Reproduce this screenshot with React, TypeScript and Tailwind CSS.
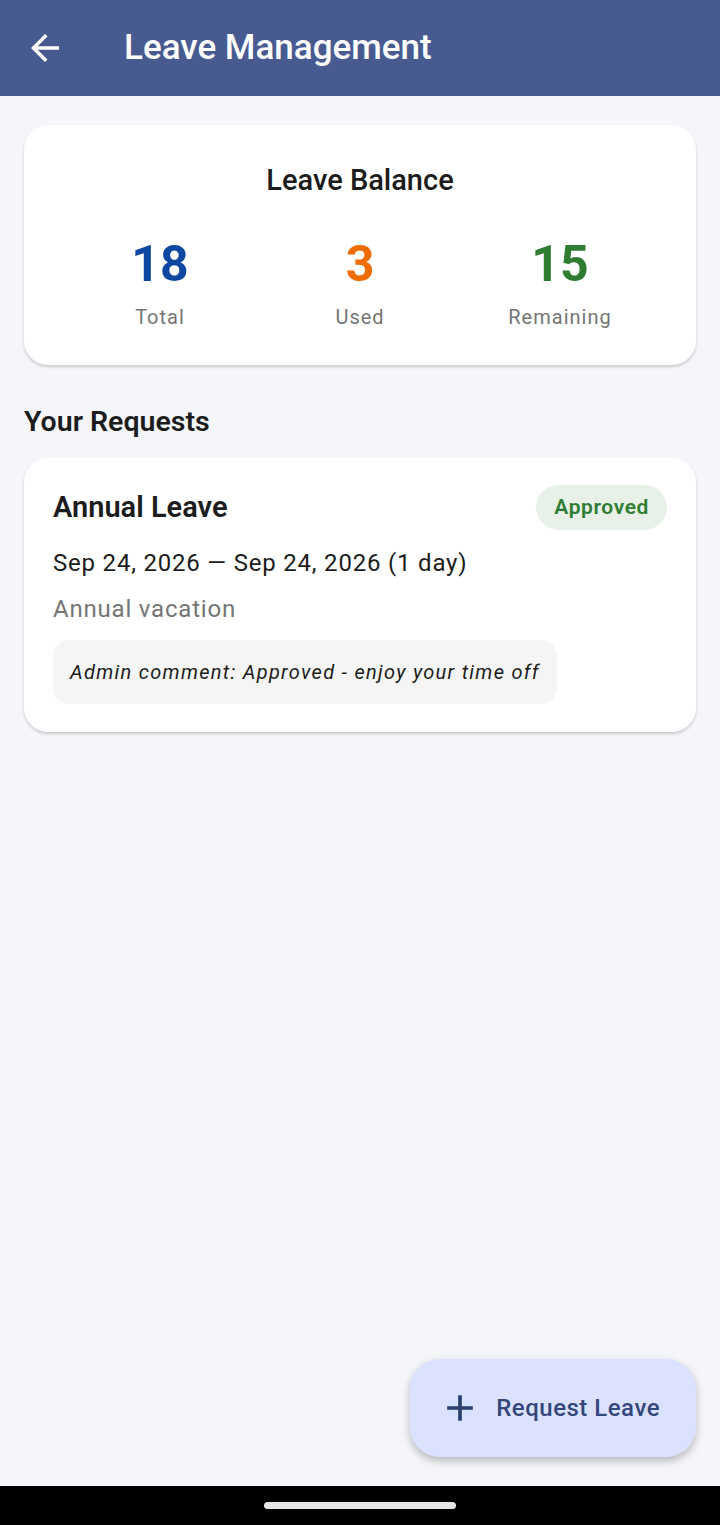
import React from "react";

const font = { fontFamily: "Roboto, 'Noto Sans', sans-serif" };

const stats = [
  { value: "18", label: "Total", color: "text-[#0d47a1]" },
  { value: "3", label: "Used", color: "text-[#ef6c00]" },
  { value: "15", label: "Remaining", color: "text-[#2e7d32]" },
];

export default function App() {
  return (
    <div style={font} className="relative flex h-[1525px] w-[720px] flex-col bg-[#f4f6fa]">
      {/* app bar */}
      <header className="flex h-[96px] items-center bg-[#485b91] px-[30px]">
        <svg width="42" height="42" viewBox="0 0 24 24" className="-ml-[6px] text-white" fill="currentColor">
          <path d="M20 11H7.83l5.59-5.59L12 4l-8 8 8 8 1.41-1.41L7.83 13H20v-2z" />
        </svg>
        <h1 className="ml-[58px] text-[35px] font-medium text-white">Leave Management</h1>
      </header>

      <main className="flex-1 px-6 pt-[29px]">
        {/* balance card */}
        <section className="rounded-[24px] bg-white px-[36px] pb-[33px] pt-[36px] shadow-[0_2px_3px_rgba(0,0,0,0.18)]">
          <h2 className="text-center text-[29px] font-medium leading-[38px] text-[#1c1c1c]">Leave Balance</h2>
          <div className="mt-[35px] grid grid-cols-3">
            {stats.map((s) => (
              <div key={s.label} className="flex flex-col items-center">
                <span className={`text-[50px] font-bold leading-[60px] ${s.color}`}>{s.value}</span>
                <span className="mt-[8px] text-[20px] tracking-[1px] text-[#757575]">{s.label}</span>
              </div>
            ))}
          </div>
        </section>

        <h3 className="mt-[36px] text-[28.5px] font-semibold text-[#1c1c1c]">Your Requests</h3>

        {/* request card */}
        <section className="mt-[14px] rounded-[24px] bg-white px-[29px] pb-[28px] pt-[27px] shadow-[0_2px_3px_rgba(0,0,0,0.18)]">
          <div className="flex items-center justify-between">
            <span className="text-[29px] font-semibold text-[#1c1c1c]">Annual Leave</span>
            <span className="rounded-full bg-[#e8f1e8] px-[18px] py-[7px] text-[21px] font-semibold tracking-[0.6px] text-[#2e7d32]">
              Approved
            </span>
          </div>
          <p className="mt-[15px] text-[24px] tracking-[0.8px] text-[#1c1c1c]">Sep 24, 2026 — Sep 24, 2026 (1 day)</p>
          <p className="mt-[10px] text-[24px] tracking-[0.8px] text-[#757575]">Annual vacation</p>
          <div className="mt-[13px] inline-block rounded-[16px] bg-[#f5f5f5] px-[17px] py-[17px] text-[20px] italic tracking-[1.3px] text-[#1c1c1c]">
            Admin comment: Approved - enjoy your time off
          </div>
        </section>
      </main>

      {/* floating action button */}
      <button className="absolute bottom-[68px] right-[24px] flex h-[98px] items-center gap-[14px] rounded-[30px] bg-[#dbe2ff] pl-[28px] pr-[36px] shadow-[0_4px_8px_rgba(0,0,0,0.25)]">
        <svg width="44" height="44" viewBox="0 0 24 24" fill="#2c3e6e">
          <path d="M19 13h-6v6h-2v-6H5v-2h6V5h2v6h6v2z" />
        </svg>
        <span className="text-[24px] font-medium tracking-[0.5px] text-[#34477a]">Request Leave</span>
      </button>

      {/* system nav bar */}
      <div className="flex h-[39px] items-center justify-center bg-black">
        <div className="h-[7px] w-[192px] rounded-full bg-[#e6e6e6]" />
      </div>
    </div>
  );
}
